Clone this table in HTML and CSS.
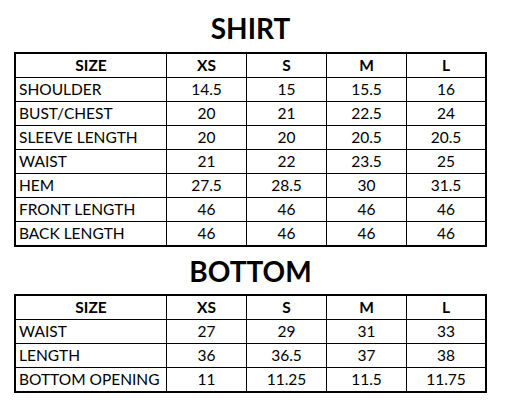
FILE: index.html
```html
<!DOCTYPE html>
<html>
<head>
<meta charset="utf-8">
<link rel="stylesheet" href="styles.css">
</head>
<body>
<div class="page">
  <h1 class="title first">SHIRT</h1>
  <div class="chart">
    <div class="cell head">SIZE</div><div class="cell head">XS</div><div class="cell head">S</div><div class="cell head">M</div><div class="cell head">L</div>
    <div class="cell label">SHOULDER</div><div class="cell">14.5</div><div class="cell">15</div><div class="cell">15.5</div><div class="cell">16</div>
    <div class="cell label">BUST/CHEST</div><div class="cell">20</div><div class="cell">21</div><div class="cell">22.5</div><div class="cell">24</div>
    <div class="cell label">SLEEVE LENGTH</div><div class="cell">20</div><div class="cell">20</div><div class="cell">20.5</div><div class="cell">20.5</div>
    <div class="cell label">WAIST</div><div class="cell">21</div><div class="cell">22</div><div class="cell">23.5</div><div class="cell">25</div>
    <div class="cell label">HEM</div><div class="cell">27.5</div><div class="cell">28.5</div><div class="cell">30</div><div class="cell">31.5</div>
    <div class="cell label">FRONT LENGTH</div><div class="cell">46</div><div class="cell">46</div><div class="cell">46</div><div class="cell">46</div>
    <div class="cell label">BACK LENGTH</div><div class="cell">46</div><div class="cell">46</div><div class="cell">46</div><div class="cell">46</div>
  </div>
  <h1 class="title second">BOTTOM</h1>
  <div class="chart">
    <div class="cell head">SIZE</div><div class="cell head">XS</div><div class="cell head">S</div><div class="cell head">M</div><div class="cell head">L</div>
    <div class="cell label">WAIST</div><div class="cell">27</div><div class="cell">29</div><div class="cell">31</div><div class="cell">33</div>
    <div class="cell label">LENGTH</div><div class="cell">36</div><div class="cell">36.5</div><div class="cell">37</div><div class="cell">38</div>
    <div class="cell label">BOTTOM OPENING</div><div class="cell">11</div><div class="cell">11.25</div><div class="cell">11.5</div><div class="cell">11.75</div>
  </div>
</div>
</body>
</html>
```
FILE: styles.css
```css
html, body {
  margin: 0;
  padding: 0;
  background: #ffffff;
}
body {
  font-family: Lato, "Open Sans", sans-serif;
  color: #000000;
}
.page {
  width: 473px;
  margin-left: 14px;
}
.title {
  margin: 0;
  font-size: 28px;
  line-height: 34px;
  font-weight: 700;
  text-align: center;
}
.title.first {
  margin-top: 11px;
  margin-bottom: 7px;
}
.title.second {
  margin-top: 7px;
  margin-bottom: 6px;
}
.chart {
  display: grid;
  grid-template-columns: 151px 80px 80px 80px 78px;
  border: 2px solid #000000;
  width: 469px;
}
.cell {
  box-sizing: border-box;
  height: 24px;
  border-right: 1px solid #000000;
  border-bottom: 1px solid #000000;
  font-size: 15.5px;
  line-height: 23px;
  text-align: center;
  white-space: nowrap;
}
.cell:nth-child(5n) {
  border-right: 0;
}
.cell:nth-last-child(-n+5) {
  border-bottom: 0;
  height: 23px;
}
.head {
  font-weight: 700;
}
.label {
  text-align: left;
  padding-left: 3px;
}
```
